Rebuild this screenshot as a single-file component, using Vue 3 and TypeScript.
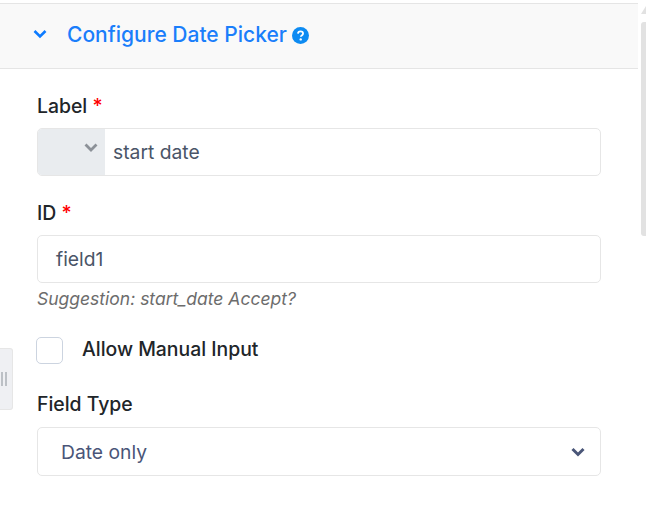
<script setup lang="ts">
const labelText = 'start date'
const idText = 'field1'
</script>

<template>
  <div class="page">
    <section class="panel">
      <header class="panel-head">
        <svg class="head-chevron" viewBox="0 0 14 10" width="14" height="10">
          <path d="M1.5 2 7 7.5 12.5 2" fill="none" stroke="#0d7bff" stroke-width="2.6" />
        </svg>
        <span class="head-title">Configure Date Picker</span>
        <svg class="head-help" viewBox="0 0 16 16" width="17" height="17">
          <circle cx="8" cy="8" r="8" fill="#0d8bf2" />
          <path d="M5.6 6.2C5.7 4.8 6.7 4.1 8 4.1c1.4 0 2.4.8 2.4 2 0 1-.6 1.4-1.2 1.8-.6.4-.9.6-.9 1.3" fill="none" stroke="#fff" stroke-width="1.7" />
          <circle cx="8.2" cy="11.7" r="1.1" fill="#fff" />
        </svg>
      </header>

      <div class="panel-body">
        <div class="field">
          <label class="field-label">Label <span class="req">*</span></label>
          <div class="input-group">
            <div class="lang-box">
              <svg viewBox="0 0 14 10" width="14" height="10">
                <path d="M1.5 1.5 7 7 12.5 1.5" fill="none" stroke="#8c9198" stroke-width="2.8" />
              </svg>
            </div>
            <div class="input-text">{{ labelText }}</div>
          </div>
        </div>

        <div class="field field-id">
          <label class="field-label">ID <span class="req">*</span></label>
          <div class="input">{{ idText }}</div>
          <p class="hint">Suggestion: start_date Accept?</p>
        </div>

        <div class="check-row">
          <span class="check-box"></span>
          <span class="check-label">Allow Manual Input</span>
        </div>

        <div class="field field-type">
          <label class="field-label">Field Type</label>
          <div class="select">
            <span>Date only</span>
            <svg viewBox="0 0 14 10" width="14" height="10">
              <path d="M1.5 2 7 7.5 12.5 2" fill="none" stroke="#4a5678" stroke-width="3" />
            </svg>
          </div>
        </div>
      </div>
    </section>

    <div class="grip"><i></i><i></i></div>

    <div class="scrollbar">
      <span class="scroll-arrow"></span>
      <span class="scroll-thumb"></span>
    </div>
  </div>
</template>

<style>
html,
body {
  background: #fff;
}
</style>

<style scoped>
.page {
  position: relative;
  width: 646px;
  height: 519px;
  overflow: hidden;
  padding-top: 3px;
  box-sizing: border-box;
  font-family: Inter, "Noto Sans", sans-serif;
  color: #212529;
}

.panel {
  width: 638px;
}

.panel-head {
  display: flex;
  align-items: center;
  height: 66px;
  box-sizing: border-box;
  padding: 0 0 4px 33px;
  background: #f9f9f9;
  border-top: 1px solid #e5e5e5;
  border-bottom: 1px solid #e5e5e5;
}

.head-title {
  margin-left: 20px;
  font-size: 21px;
  font-weight: 500;
  color: #1a7efb;
}

.head-help {
  margin-left: 5px;
  margin-top: 2px;
}

.panel-body {
  padding: 25px 37px 0;
  width: 564px;
}

.field-label {
  display: block;
  height: 24px;
  line-height: 24px;
  margin-bottom: 10px;
  font-size: 19.4px;
  font-weight: 500;
}

.req {
  color: #f00;
}

.field-id {
  margin-top: 25px;
}

.input-group,
.input,
.select {
  height: 48px;
  box-sizing: border-box;
  border: 1px solid #e6e6e6;
  border-radius: 5px;
  font-size: 19.3px;
  color: #4a5568;
}

.input-group {
  display: flex;
  overflow: hidden;
}

.lang-box {
  width: 67px;
  flex: none;
  display: flex;
  justify-content: flex-end;
  padding: 14px 7px 0 0;
  box-sizing: border-box;
  background: #e9ecef;
}

.input-text {
  padding-left: 8px;
  line-height: 46px;
}

.input {
  padding-left: 18px;
  line-height: 46px;
}

.hint {
  margin: 6px 0 0;
  font-size: 17.5px;
  line-height: 19px;
  font-style: italic;
  color: #6c6c6c;
}

.check-row {
  display: flex;
  align-items: center;
  margin: 28px 0 0 -1px;
  height: 28px;
}

.check-box {
  width: 27px;
  height: 27px;
  box-sizing: border-box;
  border: 1px solid #ccd4e0;
  border-radius: 5px;
}

.check-label {
  margin-left: 19px;
  padding-bottom: 3px;
  font-size: 19.4px;
  font-weight: 500;
}

.field-type {
  margin-top: 28px;
}

.field-type .field-label {
  margin-bottom: 11px;
}

.select {
  display: flex;
  align-items: center;
  justify-content: space-between;
  height: 49px;
  padding: 0 15px 0 23px;
  color: #4a5578;
}

.grip {
  position: absolute;
  left: 0;
  top: 348px;
  width: 13px;
  height: 62px;
  box-sizing: border-box;
  display: flex;
  justify-content: center;
  align-items: center;
  gap: 2px;
  padding-right: 4px;
  background: #eff0f3;
  border: 1px solid #e6e6e6;
  border-left: none;
  border-radius: 0 3px 3px 0;
}

.grip i {
  width: 2px;
  height: 14px;
  background: #bcc0c5;
}

.scrollbar {
  position: absolute;
  right: 0;
  top: 6px;
  width: 5px;
}

.scroll-arrow {
  display: block;
  width: 0;
  height: 0;
  border-left: 5px solid transparent;
  border-bottom: 8px solid #e2e2e2;
}

.scroll-thumb {
  display: block;
  margin-top: 8px;
  height: 214px;
  background: #e2e2e2;
  border-radius: 3px 0 0 3px;
}
</style>
